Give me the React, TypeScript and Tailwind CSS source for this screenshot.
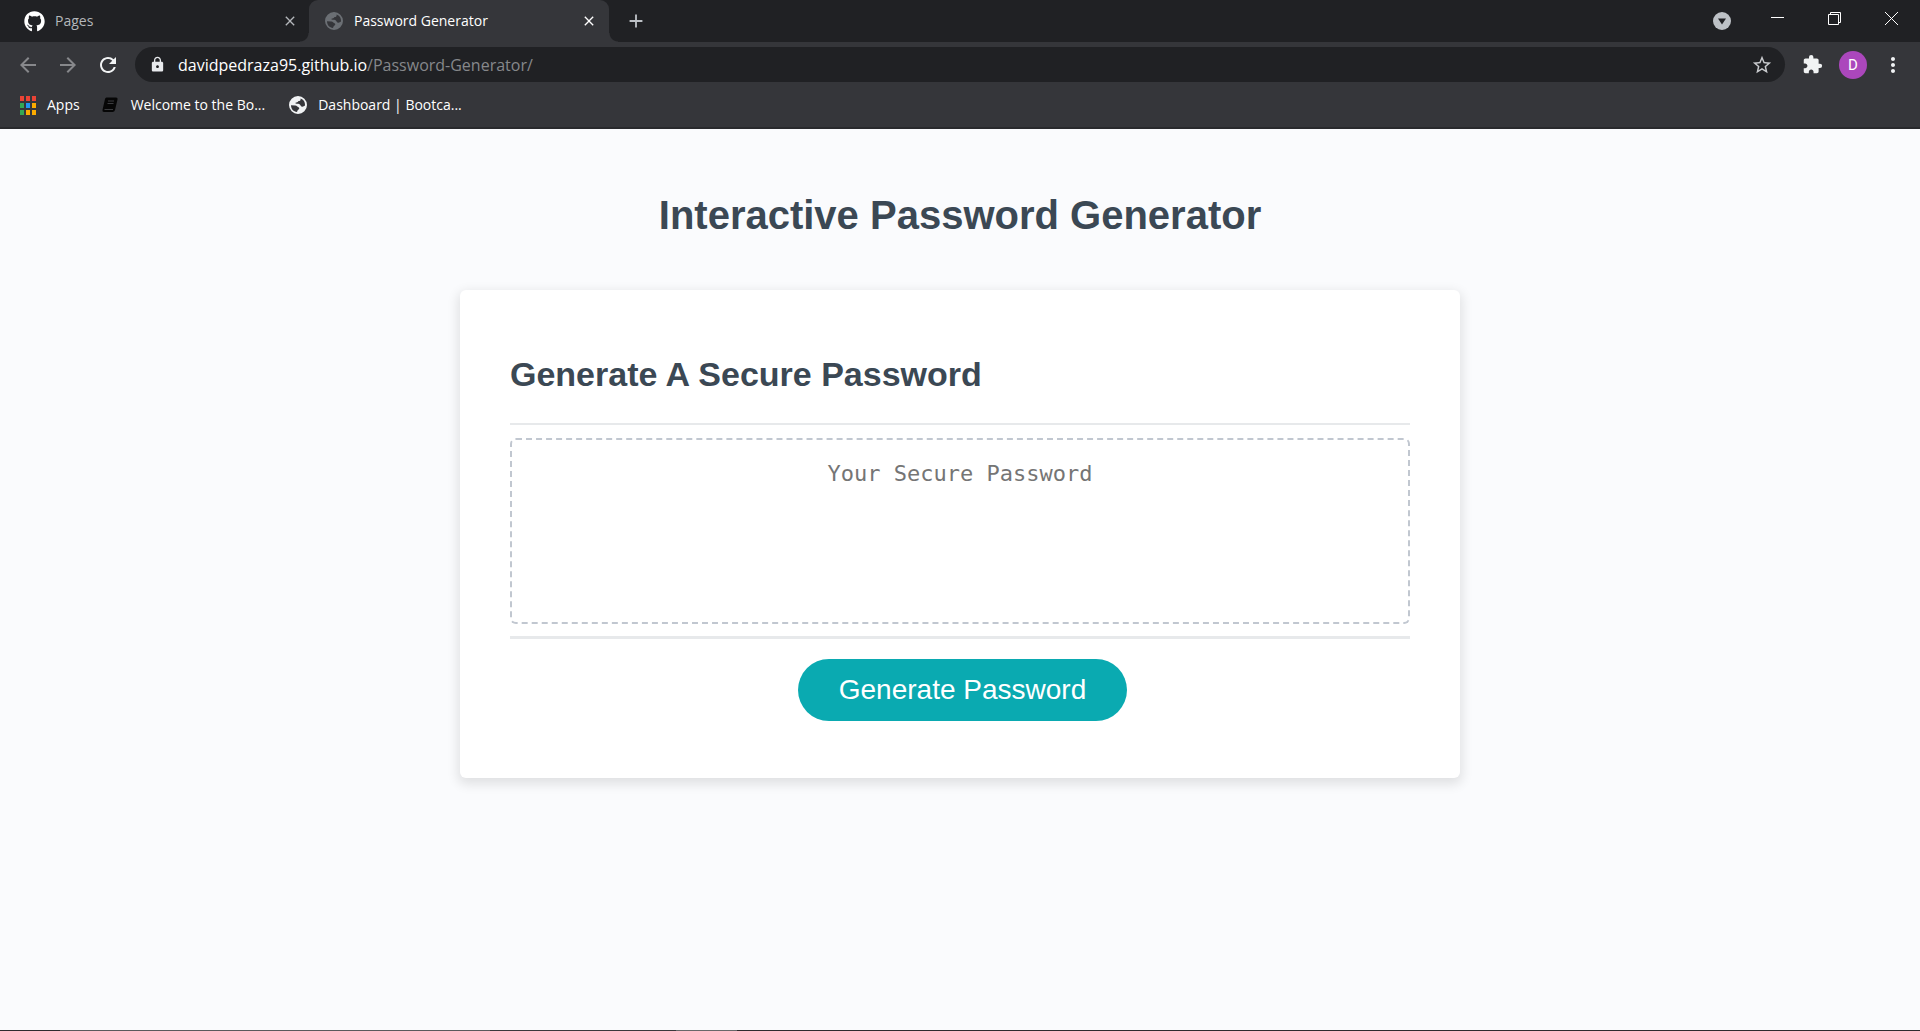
import React from "react";
import { FaGithub } from "react-icons/fa";
import {
  MdAdd,
  MdArrowBack,
  MdArrowForward,
  MdClose,
  MdExtension,
  MdLock,
  MdMoreVert,
  MdRefresh,
  MdStarBorder,
} from "react-icons/md";

function GlobeIcon({ className }: { className: string }) {
  return (
    <svg viewBox="0 0 18 18" className={className} aria-hidden="true">
      <path
        fill="currentColor"
        fillRule="evenodd"
        d="M9 0 A9 9 0 1 1 9 18 A9 9 0 1 1 9 0 Z
           M11.500 2.400 C12 4 11 5 9.500 5 C9 6.500 7.500 6 6.500 6.800 C6 8.200 8.500 7.500 10 8 C11.500 8.500 11.500 10 12.500 10.500 C13.500 11 15 10.500 16 9.500 C16.300 6 14.500 3.300 11.500 2.400 Z
           M2 9.300 L6.500 9.500 C8 9.500 8 11 9.500 11.200 C10.500 11.500 10.500 13 9.500 13.500 C8.500 14 8.500 15 8 16 C4.500 15.700 2 13 2 9.300 Z"
      />
    </svg>
  );
}

function AppsIcon() {
  return (
    <span className="grid grid-cols-3 gap-[2px]" aria-hidden="true">
      <i className="h-[5px] w-1 bg-[#ea4335]" />
      <i className="h-[5px] w-1 bg-[#ea4335]" />
      <i className="h-[5px] w-1 bg-[#ea4335]" />
      <i className="h-[5px] w-1 bg-[#34a853]" />
      <i className="h-[5px] w-1 bg-[#2196f3]" />
      <i className="h-[5px] w-1 bg-[#fbab00]" />
      <i className="h-[5px] w-1 bg-[#34a853]" />
      <i className="h-[5px] w-1 bg-[#fbab00]" />
      <i className="h-[5px] w-1 bg-[#fbab00]" />
    </span>
  );
}

function BookIcon() {
  return (
    <svg viewBox="0 0 18 18" className="size-[18px]" aria-hidden="true">
      <path
        d="M5.500 1.500 H15 Q17 1.500 16.500 3.500 L14 14 Q13.500 16 11.500 16 H3 Q1 16 1.500 14 L4 3 Q4.300 1.500 5.500 1.500 Z"
        fill="#060606"
      />
      <path d="M7 5 H13 M6.500 7.500 H12.500 M3.500 13.500 H12" stroke="#3c3d40" fill="none" />
    </svg>
  );
}

function TabStrip() {
  return (
    <div className="flex h-[42px] bg-[#202124]">
      <div className="flex w-[309px] items-center pr-[11px] pl-6 text-[#b4b7bb]">
        <FaGithub className="mr-[10px] size-[21px] text-white" />
        <span className="flex-1">Pages</span>
        <button type="button" aria-label="Close Pages">
          <MdClose className="size-4" />
        </button>
      </div>
      <div className="relative flex w-[300px] items-center rounded-t-[9px] bg-[#35363a] pr-3 pl-4 text-white before:absolute before:bottom-0 before:-left-[9px] before:size-[9px] before:bg-[radial-gradient(circle_at_0_0,#202124_8px,#35363a_9px)] after:absolute after:-right-[9px] after:bottom-0 after:size-[9px] after:bg-[radial-gradient(circle_at_100%_0,#202124_8px,#35363a_9px)]">
        <GlobeIcon className="mr-[11px] size-[18px] text-[#6b6f74]" />
        <span className="flex-1">Password Generator</span>
        <button type="button" aria-label="Close Password Generator">
          <MdClose className="size-4" />
        </button>
      </div>
      <button type="button" aria-label="New tab" className="ml-4 text-[#bdc1c6]">
        <MdAdd className="size-[22px]" />
      </button>
      <div className="ml-auto flex items-start text-white">
        <button type="button" aria-label="Search tabs" className="mr-[18px] flex h-[42px] items-center">
          <svg viewBox="0 0 18 18" className="size-[18px]">
            <circle cx="9" cy="9" r="9" fill="#bdc1c6" />
            <path d="M5 6.500 H13 L9 12.500 Z" fill="#202124" />
          </svg>
        </button>
        <button type="button" aria-label="Minimize" className="flex h-9 w-[57px] justify-center">
          <svg viewBox="0 0 13 36" className="h-9 w-[13px]">
            <path d="M0 17.500 H13" stroke="currentColor" />
          </svg>
        </button>
        <button type="button" aria-label="Restore" className="flex h-9 w-[57px] justify-center">
          <svg viewBox="0 0 13 36" className="h-9 w-[13px]" fill="none" stroke="currentColor">
            <path d="M0.500 14.500 H10.500 V24.500 H0.500 Z M2.500 14.500 V12.500 H12.500 V22.500 H10.500" />
          </svg>
        </button>
        <button type="button" aria-label="Close window" className="flex h-9 w-[57px] justify-center">
          <svg viewBox="0 0 13 36" className="h-9 w-[13px]" fill="none" stroke="currentColor">
            <path d="M0 12 L13 25 M13 12 L0 25" />
          </svg>
        </button>
      </div>
    </div>
  );
}

function Toolbar() {
  return (
    <div className="flex h-[45px] items-center bg-[#35363a] pr-[15px] pl-4 text-[#f1f3f4]">
      <button type="button" aria-label="Back" className="mr-4 text-[#87888b]">
        <MdArrowBack className="size-6" />
      </button>
      <button type="button" aria-label="Forward" className="mr-4 text-[#87888b]">
        <MdArrowForward className="size-6" />
      </button>
      <button type="button" aria-label="Reload" className="mr-[15px]">
        <MdRefresh className="size-6" />
      </button>
      <div className="flex h-[35px] flex-1 items-center rounded-full bg-[#202124] pr-3 pl-[14px]">
        <MdLock className="mr-3 size-[17px] text-[#e8eaed]" />
        <span className="flex-1 text-[16px] text-white">
          davidpedraza95.github.io<span className="text-[#86888b]">/Password-Generator/</span>
        </span>
        <button type="button" aria-label="Bookmark this tab" className="text-[#c9cbce]">
          <MdStarBorder className="size-[22px]" />
        </button>
      </div>
      <button type="button" aria-label="Extensions" className="ml-[17px]">
        <MdExtension className="size-[21px]" />
      </button>
      <button
        type="button"
        aria-label="Profile"
        className="ml-4 flex size-7 items-center justify-center rounded-full bg-[#ab47bc] font-['Roboto',sans-serif] text-[15px] text-white"
      >
        D
      </button>
      <button type="button" aria-label="Menu" className="ml-[14px]">
        <MdMoreVert className="size-6" />
      </button>
    </div>
  );
}

function BookmarksBar() {
  return (
    <nav className="flex h-[42px] items-center border-b-2 border-[#292a2d] bg-[#35363a] pb-1 pl-5 text-white">
      <a href="#apps" className="mr-[21px] flex items-center gap-[11px]">
        <AppsIcon />
        Apps
      </a>
      <a href="#welcome" className="mr-6 flex items-center gap-3">
        <BookIcon />
        Welcome to the Bo...
      </a>
      <a href="#dashboard" className="flex items-center gap-[11px]">
        <GlobeIcon className="size-[18px] text-[#f1f3f4]" />
        Dashboard | Bootca...
      </a>
    </nav>
  );
}

function PasswordPage() {
  return (
    <main className="flex flex-1 flex-col items-center bg-[#fafbfd] font-['Liberation_Sans',Arial,sans-serif] text-[#3b4854]">
      <h1 className="mt-[63px] text-[40px] leading-[46px] font-bold">Interactive Password Generator</h1>
      <section className="mt-[52px] w-full max-w-[1000px] rounded-[6px] bg-white px-[50px] pb-[57px] shadow-[0_4px_12px_2px_rgba(0,0,0,0.11)]">
        <h2 className="pt-16 text-[34px] leading-[40px] font-bold">Generate A Secure Password</h2>
        <div className="mt-[29px] border-t-2 border-b-[3px] border-[#e7e9eb] pt-[13px] pb-[12px]">
          <textarea
            readOnly
            aria-label="Your Secure Password"
            placeholder="Your Secure Password"
            className="block h-[186px] w-full resize-none rounded-[6px] border-2 border-dashed border-[#c1c7d0] py-5 text-center font-['DejaVu_Sans_Mono',monospace] text-[22px] leading-[28px] outline-none placeholder:text-[#757575]"
          />
        </div>
        <div className="mt-5 flex justify-center pl-[5px]">
          <button type="button" className="h-[62px] w-[329px] rounded-full bg-[#0aaab1] text-[28px] text-white">
            Generate Password
          </button>
        </div>
      </section>
    </main>
  );
}

export default function App() {
  return (
    <div className="flex min-h-screen flex-col font-['Open_Sans','Noto_Sans',sans-serif] text-[14px] leading-5">
      <header>
        <TabStrip />
        <Toolbar />
        <BookmarksBar />
      </header>
      <PasswordPage />
      <footer className="flex h-px bg-[#2e2b2f]">
        <div className="w-[60px]" />
        <div className="w-[430px] bg-[#5a5a5c]" />
        <div className="w-[186px] bg-[#3a383b]" />
        <div className="w-[61px] bg-[#68686a]" />
      </footer>
    </div>
  );
}
